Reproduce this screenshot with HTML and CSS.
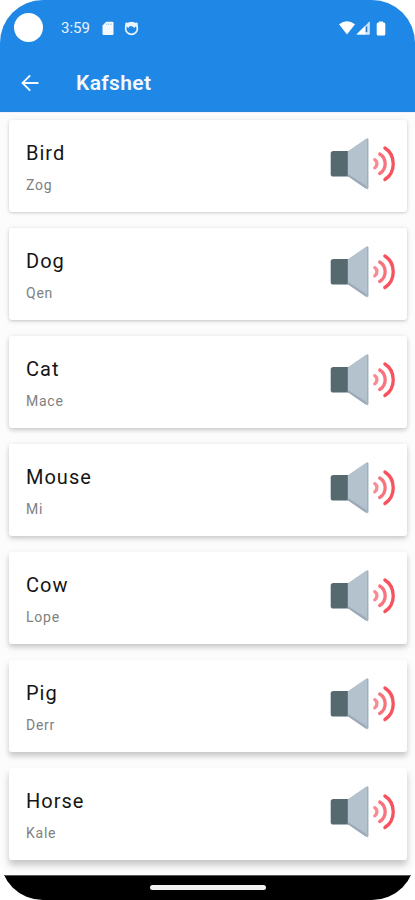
FILE: index.html
```
<!DOCTYPE html>
<html lang="sq">

<head>
    <meta charset="UTF-8">
    <meta name="viewport" content="width=device-width, initial-scale=1.0">
    <title>Kafshet</title>
    <link rel="stylesheet" href="styles.css">
</head>

<body>
    <!-- speaker icon, reused in every card -->
    <svg class="defs" width="0" height="0">
        <symbol id="speaker" viewBox="0 0 70 60">
            <rect x="1.700" y="17" width="20" height="25.500" rx="2.600" fill="#56696f" />
            <path d="M18.800 17.300L37 4.700Q39.300 3.500 39.300 5.700V53.800Q39.300 56 37 54.800L18.800 42.300Z" fill="#b3c2cd" />
            <path d="M38 4.700L39.300 5V54.500L38 54.300Z" fill="#9fafbb" />
            <path d="M18.800 39.800L37.500 52V55L18.800 42.300Z" fill="#9dabb8" />
            <g fill="none" stroke-width="3.300" stroke-linecap="round">
                <path d="M45.800 25.700C48.600 27.500 48.600 32 45.800 33.800" stroke="#f98a93" />
                <path d="M50.700 20C58 24.500 58 35 50.700 39.500" stroke="#f8737e" />
                <path d="M55.900 14C67 21 67 38.500 55.900 45.500" stroke="#f7535f" />
            </g>
        </symbol>
    </svg>

    <div class="phone">
        <header>
            <div class="status">
                <span class="camera"></span>
                <span class="time">3:59</span>
                <svg class="sd" width="12" height="15" viewBox="0 0 12 15">
                    <path d="M4.200 .7H10.500Q11.500 .7 11.500 1.700V13Q11.500 14 10.500 14H1.500Q.5 14 .5 13V4.500Z" fill="#f4f9fe" />
                    <path d="M4.600 2.500V4M6.800 2.500V4M9 2.500V4" stroke="#7db7ef" stroke-width=".8" />
                </svg>
                <svg class="face" width="15" height="15" viewBox="0 0 15 15">
                    <circle cx="7.500" cy="7.500" r="5.900" fill="none" stroke="#eaf4fd" stroke-width="1.700" />
                    <path d="M1 5.500L1.500 1.500L5 2H10L13.500 1.500L14 5.500L11.500 5.500L10.500 7L8.500 5.500L6 5L4.200 7L3 5.500Z" fill="#eaf4fd" />
                </svg>
                <div class="signals">
                    <svg width="16" height="14" viewBox="0 0 16 14">
                        <path d="M0 3.200Q8-2.800 16 3.200L8 13.500Z" fill="#fff" />
                    </svg>
                    <svg width="14" height="14" viewBox="0 0 14 14">
                        <path d="M13.500 .5V13.500H.5Z" fill="#c4dff9" />
                        <path d="M9.300 4.700V13.500H.5Z" fill="#fff" />
                        <path d="M10.500 5.500V11" stroke="#2878c9" stroke-width="1.500" />
                        <path d="M13.200 1V13.200H9" fill="none" stroke="#e2f0fd" stroke-width=".8" />
                    </svg>
                    <svg class="battery" width="10" height="15" viewBox="0 0 10 15">
                        <path d="M3 1.500V.5H7V1.500H8Q9.300 1.500 9.300 3V13Q9.300 14.500 8 14.500H2Q.7 14.500 .7 13V3Q.7 1.500 2 1.500Z" fill="#fff" />
                    </svg>
                </div>
            </div>
            <div class="toolbar">
                <svg width="18" height="18" viewBox="0 0 18 18">
                    <path d="M17.500 9H1.500M9.200 1.300L1.500 9L9.200 16.700" fill="none" stroke="#f2f8fe" stroke-width="1.900" />
                </svg>
                <h1>Kafshet</h1>
            </div>
        </header>

        <main>
            <div class="card s1">
                <div>
                    <h2>Bird</h2>
                    <p>Zog</p>
                </div>
                <svg class="speaker"><use href="#speaker" /></svg>
            </div>
            <div class="card s2">
                <div>
                    <h2>Dog</h2>
                    <p>Qen</p>
                </div>
                <svg class="speaker"><use href="#speaker" /></svg>
            </div>
            <div class="card s3">
                <div>
                    <h2>Cat</h2>
                    <p>Mace</p>
                </div>
                <svg class="speaker"><use href="#speaker" /></svg>
            </div>
            <div class="card s4">
                <div>
                    <h2>Mouse</h2>
                    <p>Mi</p>
                </div>
                <svg class="speaker"><use href="#speaker" /></svg>
            </div>
            <div class="card s5">
                <div>
                    <h2>Cow</h2>
                    <p>Lope</p>
                </div>
                <svg class="speaker"><use href="#speaker" /></svg>
            </div>
            <div class="card s6">
                <div>
                    <h2>Pig</h2>
                    <p>Derr</p>
                </div>
                <svg class="speaker"><use href="#speaker" /></svg>
            </div>
            <div class="card s7">
                <div>
                    <h2>Horse</h2>
                    <p>Kale</p>
                </div>
                <svg class="speaker"><use href="#speaker" /></svg>
            </div>
        </main>

        <footer>
            <span class="handle"></span>
        </footer>
    </div>
</body>

</html>
```
FILE: styles.css
```
* {
    margin: 0;
    padding: 0;
    box-sizing: border-box;
}

body {
    background: #fff;
    font-family: Roboto, "Liberation Sans", sans-serif;
}

.defs {
    position: absolute;
}

.phone {
    display: flex;
    flex-direction: column;
    width: 415px;
    height: 900px;
    border-radius: 43px;
    overflow: hidden;
}

header {
    height: 112px;
    background: #1f87e5;
    border-bottom: 1px solid #2a86dd;
    flex-shrink: 0;
}

.status {
    display: flex;
    align-items: center;
    height: 56px;
    padding-left: 14px;
    padding-right: 29px;
}

.camera {
    width: 29px;
    height: 29px;
    border-radius: 50%;
    background: #fff;
    margin-bottom: 1px;
}

.time {
    width: 30px;
    margin-left: 18px;
    font-size: 15px;
    line-height: 20px;
    color: #e8f3fd;
    white-space: nowrap;
}

.sd {
    margin-left: 11px;
}

.face {
    margin-left: 10px;
}

.signals {
    display: flex;
    align-items: center;
    margin-left: auto;
}

.signals svg + svg {
    margin-left: 1px;
}

.signals .battery {
    margin-left: 6px;
}

.toolbar {
    display: flex;
    align-items: center;
    height: 54px;
    padding-left: 21px;
}

.toolbar h1 {
    margin-left: 37px;
    font-size: 21px;
    font-weight: 600;
    line-height: 28px;
    letter-spacing: .35px;
    color: #f4f9fe;
}

main {
    display: flex;
    flex-direction: column;
    gap: 16px;
    height: 763px;
    padding: 7px 8px 0 9px;
    background: #fcfcfc;
    border-top: 1px solid #eef1fb;
    overflow: hidden;
}

.card {
    display: flex;
    justify-content: space-between;
    height: 92px;
    flex-shrink: 0;
    padding: 19px 8px 0 17px;
    background: #fff;
    border-radius: 3px;
}

.card h2 {
    font-size: 20px;
    font-weight: 400;
    line-height: 28px;
    letter-spacing: 1px;
    color: #151515;
}

.card p {
    margin-top: 8px;
    font-size: 14px;
    line-height: 20px;
    letter-spacing: .75px;
    color: #808080;
}

.speaker {
    width: 70px;
    height: 60px;
    margin-top: -5px;
}

/* the shadow drops further the lower the card sits on the screen */
.s1 { box-shadow: 0 1px 3px rgba(0, 0, 0, .17), 0 0 7px rgba(0, 0, 0, .06); }
.s2 { box-shadow: 0 1px 3px rgba(0, 0, 0, .18), 0 1px 7px rgba(0, 0, 0, .07); }
.s3 { box-shadow: 0 2px 4px rgba(0, 0, 0, .17), 0 1px 7px rgba(0, 0, 0, .07); }
.s4 { box-shadow: 0 2px 4px rgba(0, 0, 0, .17), 0 2px 8px rgba(0, 0, 0, .08); }
.s5 { box-shadow: 0 3px 5px rgba(0, 0, 0, .16), 0 3px 8px rgba(0, 0, 0, .08); }
.s6 { box-shadow: 0 4px 5px rgba(0, 0, 0, .15), 0 4px 8px rgba(0, 0, 0, .08); }
.s7 { box-shadow: 0 5px 6px rgba(0, 0, 0, .15), 0 5px 8px rgba(0, 0, 0, .08); }

footer {
    display: flex;
    justify-content: center;
    height: 25px;
    padding-top: 9px;
    background: #000;
    border-top: 1px solid #555;
}

.handle {
    width: 116px;
    height: 5px;
    border-radius: 3px;
    background: #f2f2f2;
}
```
